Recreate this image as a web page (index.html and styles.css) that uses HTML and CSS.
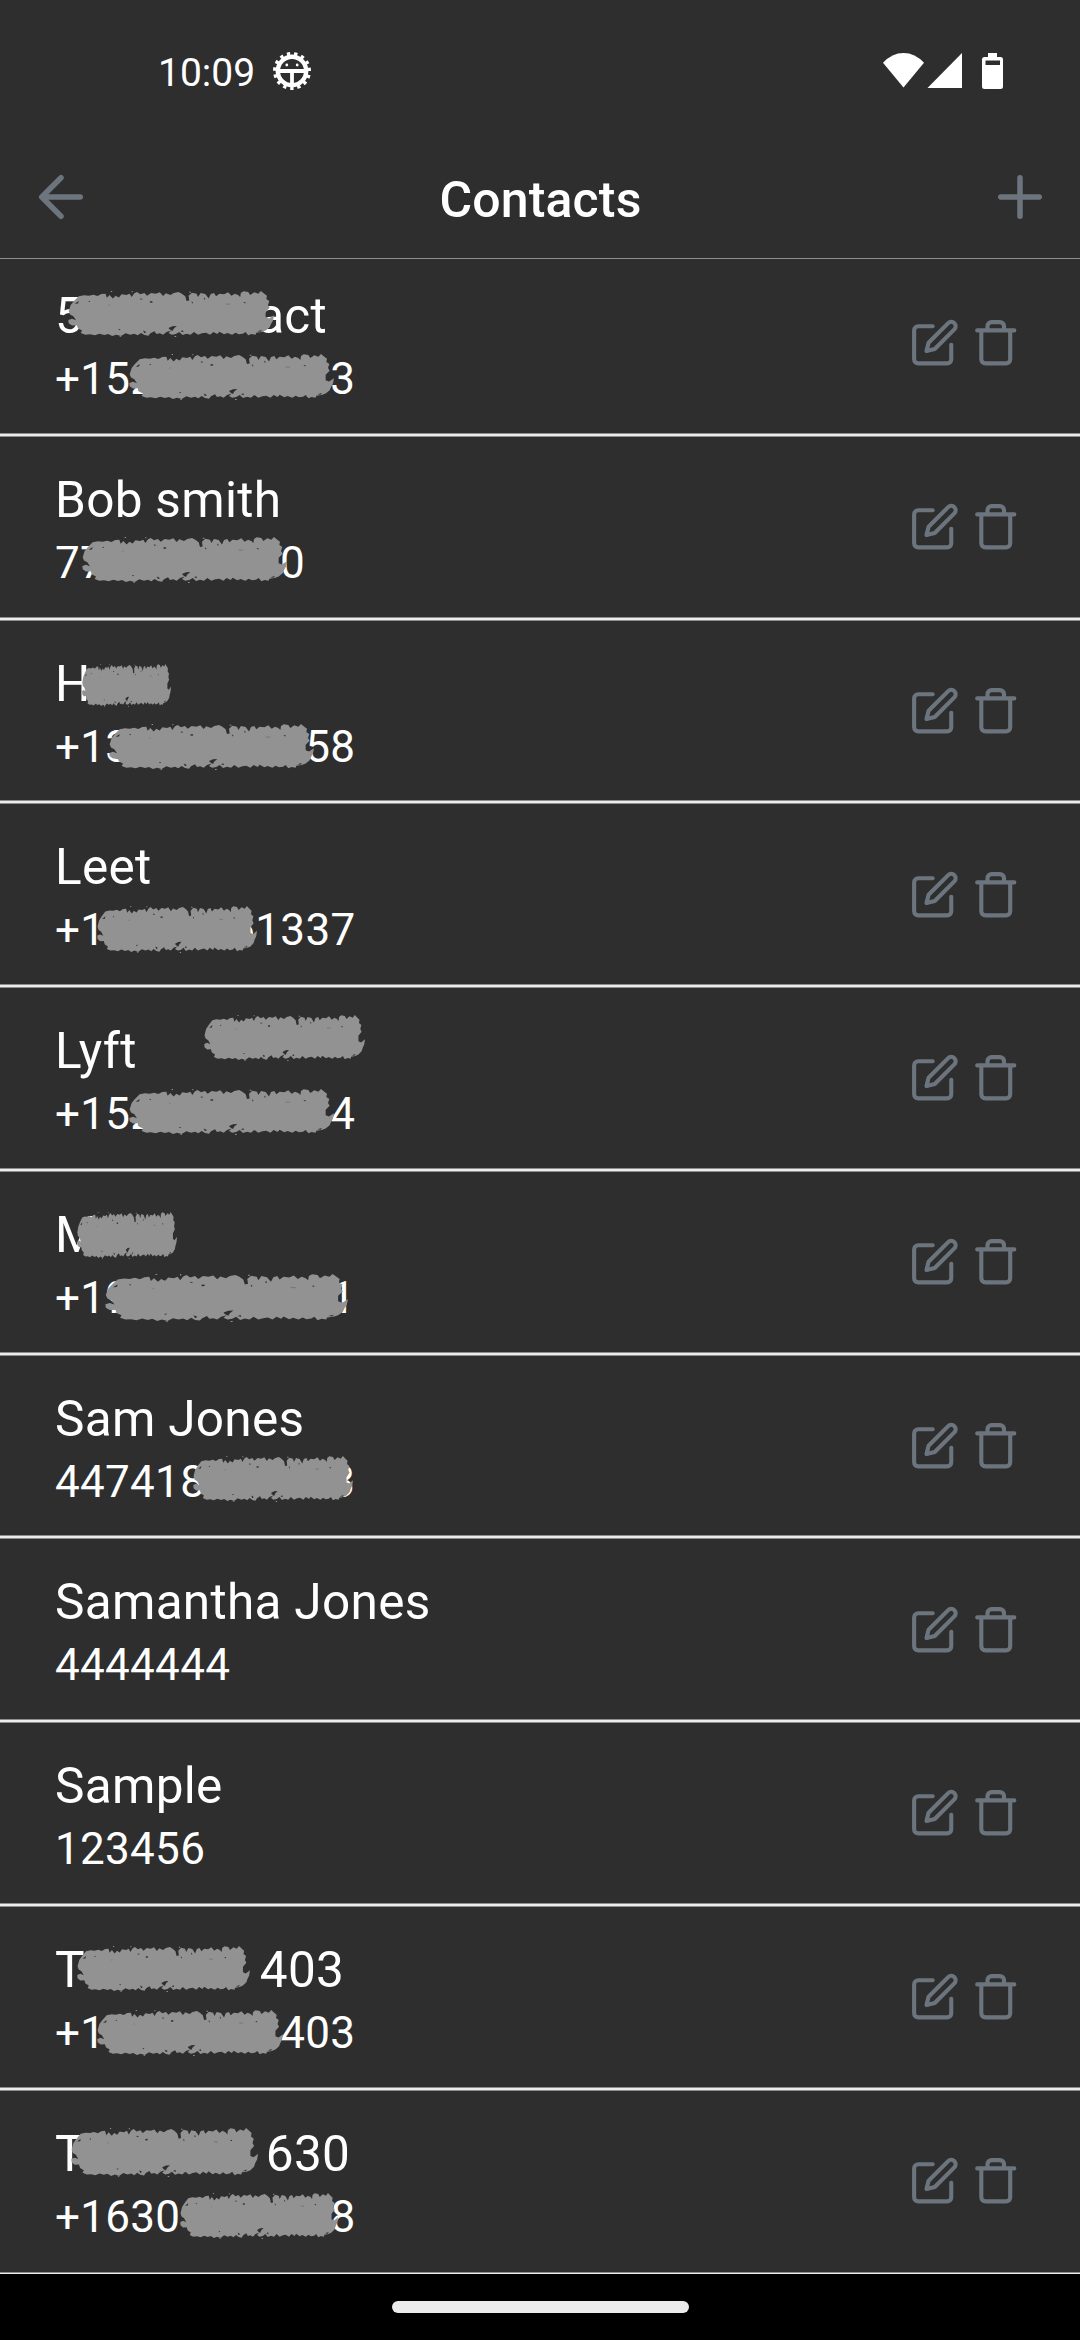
FILE: index.html
```html
<!DOCTYPE html>
<html lang="en">
<head>
<meta charset="utf-8">
<title>Contacts</title>
<link rel="stylesheet" href="styles.css">
</head>
<body>
<svg class="defs" aria-hidden="true">
  <symbol id="edit" viewBox="0 0 24 24"><path d="M11 4H4a2 2 0 0 0-2 2v14a2 2 0 0 0 2 2h14a2 2 0 0 0 2-2v-7"/><path d="M18.5 2.5a2.121 2.121 0 0 1 3 3L12 15l-4 1 1-4 9.5-9.5z"/></symbol>
  <symbol id="trash" viewBox="0 0 24 24"><path d="M3 6h18M19 6v14a2 2 0 0 1-2 2H7a2 2 0 0 1-2-2V6m3 0V4a2 2 0 0 1 2-2h4a2 2 0 0 1 2 2v2"/></symbol>
  <symbol id="scribble" viewBox="0 0 615 137" preserveAspectRatio="none">
    <path fill="#929292" d="M2 60L8 42 18 30 32 16 48 13 62 14 76 11 88 15 100 9 112 8 116 20 124 12 134 22 142 14 152 19 160 10 174 12 184 8 190 18 198 7 206 3 216 10 228 6 236 14 248 6 262 8 274 4 284 15 292 7 306 12 316 6 330 3 340 8 350 16 354 30 362 28 360 14 370 5 384 8 388 18 396 6 410 9 420 22 426 9 436 6 442 16 452 8 466 10 478 4 488 14 498 8 508 12 514 18 516 6 524 1 538 3 544 12 556 4 568 8 576 0 586 8 594 14 592 24 601 30 597 42 602 50 590 62 590 78 600 82 615 72 612 88 606 98 602 108 590 118 578 122 562 124 560 130 548 128 538 132 530 122 522 127 510 129 500 124 490 130 476 125 466 129 452 121 446 128 434 122 424 130 412 124 400 126 388 130 376 122 366 130 354 127 342 131 332 122 322 128 310 130 300 125 308 118 294 122 284 130 274 126 264 128 258 120 246 126 240 133 228 131 218 125 208 132 198 127 186 130 172 126 158 134 144 130 132 134 120 128 108 131 94 127 80 132 66 129 52 130 38 125 42 118 30 112 26 102 12 103 2 96 1 86 12 83 24 87 16 75 6 70Z"/>
    <path fill="#929292" d="M128 0h4v3h-4zM190 0h3v4h-3zM362 2h5v3h-5zM318 134h5v3h-5zM154 134h5v2h-5z"/>
    <path fill="#2f2f2f" d="M300 110l12-5 13-1-9 8-4 7-9-5zM20 38l12-8-2 7zM244 31l7-1 2 4-8 1zM368 31l5 2-1 5zM215 22l9 2-7 2zM60 31l6-2-1 4zM523 34l6-1 1 4zM224 118l10 4-6 4zM565 120l14-4-4 5zM405 24l3-5 2 7zM150 114l7-1-4 4zM336 120l7-3 2 6z"/>
    <path fill="#777" d="M470 37l15 1-4 3-11-1zM120 40l8 2-8 1z"/>
  </symbol>
</svg>
<div class="screen">
  <div class="status">
    <div class="status-left">
      <span>10:09</span>
      <svg class="debug" viewBox="-20 -20 40 40">
        <circle r="14.2" fill="none" stroke="#fff" stroke-width="4.4"/>
        <circle r="17.2" fill="none" stroke="#fff" stroke-width="3.6" pathLength="150" stroke-dasharray="4.6 5.4" stroke-dashoffset="-0.2" transform="rotate(84.5)"/>
        <path d="M-13 0H13M0 0V14" stroke="#fff" stroke-width="3.8"/>
        <circle cx="-5.2" cy="-6" r="1.4" fill="#fff"/><circle cx="5.2" cy="-6" r="1.4" fill="#fff"/>
      </svg>
    </div>
    <svg class="signals" viewBox="882 52 123 38" fill="#fff">
      <path d="M903.5 87.5L883 62.8Q892 53 903.5 53T924 62.8Z"/>
      <path d="M962 53V88H927.5Z"/>
      <path fill-rule="evenodd" d="M988 53h9v4h3.5q2.5 0 2.5 2.5v27q0 2.500-2.500 2.500h-16q-2.500 0-2.500-2.500v-27q0-2.500 2.500-2.500h3.500zM985.500 60.500v4.500h14.500v-4.500z"/>
    </svg>
  </div>
  <header class="bar">
    <svg class="nav" viewBox="0 0 24 24"><path d="M19 12H5M12 19l-7-7 7-7"/></svg>
    <h1>Contacts</h1>
    <svg class="nav" viewBox="0 0 24 24"><path d="M12 5v14M5 12h14"/></svg>
  </header>
  <ul class="list">
    <li><div class="row"><div class="text"><div class="name">5<i style="width:174px"></i>act</div><div class="phone">+152<i style="width:175px"></i>3</div></div><svg class="icon"><use href="#edit"/></svg><svg class="icon"><use href="#trash"/></svg></div>
      <svg class="mark" style="left:68px;top:38px;width:206px;height:46px"><use href="#scribble"/></svg><svg class="mark" style="left:129px;top:101px;width:205px;height:46px"><use href="#scribble"/></svg></li>
    <li><div class="row"><div class="text"><div class="name">Bob smith</div><div class="phone">77<i style="width:175px"></i>0</div></div><svg class="icon"><use href="#edit"/></svg><svg class="icon"><use href="#trash"/></svg></div>
      <svg class="mark" style="left:82px;top:100px;width:205px;height:46px"><use href="#scribble"/></svg></li>
    <li><div class="row"><div class="text"><div class="name">H</div><div class="phone">+13<i style="width:175px"></i>58</div></div><svg class="icon"><use href="#edit"/></svg><svg class="icon"><use href="#trash"/></svg></div>
      <svg class="mark" style="left:82px;top:43px;width:89px;height:43px"><use href="#scribble"/></svg><svg class="mark" style="left:109px;top:103px;width:205px;height:46px"><use href="#scribble"/></svg></li>
    <li><div class="row"><div class="text"><div class="name">Leet</div><div class="phone">+1<i style="width:125px"></i>61337</div></div><svg class="icon"><use href="#edit"/></svg><svg class="icon"><use href="#trash"/></svg></div>
      <svg class="mark" style="left:97px;top:102px;width:160px;height:47px"><use href="#scribble"/></svg></li>
    <li><div class="row"><div class="text"><div class="name">Lyft</div><div class="phone">+152<i style="width:175px"></i>4</div></div><svg class="icon"><use href="#edit"/></svg><svg class="icon"><use href="#trash"/></svg></div>
      <svg class="mark" style="left:204px;top:27px;width:161px;height:46px"><use href="#scribble"/></svg><svg class="mark" style="left:129px;top:101px;width:205px;height:46px"><use href="#scribble"/></svg></li>
    <li><div class="row"><div class="text"><div class="name">M</div><div class="phone">+19<i style="width:200px"></i>1</div></div><svg class="icon"><use href="#edit"/></svg><svg class="icon"><use href="#trash"/></svg></div>
      <svg class="mark" style="left:77px;top:40px;width:100px;height:47px"><use href="#scribble"/></svg><svg class="mark" style="left:105px;top:102px;width:243px;height:48px"><use href="#scribble"/></svg></li>
    <li><div class="row"><div class="text"><div class="name">Sam Jones</div><div class="phone">447418<i style="width:125px"></i>3</div></div><svg class="icon"><use href="#edit"/></svg><svg class="icon"><use href="#trash"/></svg></div>
      <svg class="mark" style="left:193px;top:100px;width:160px;height:46px"><use href="#scribble"/></svg></li>
    <li><div class="row"><div class="text"><div class="name">Samantha Jones</div><div class="phone">4444444</div></div><svg class="icon"><use href="#edit"/></svg><svg class="icon"><use href="#trash"/></svg></div></li>
    <li><div class="row"><div class="text"><div class="name">Sample</div><div class="phone">123456</div></div><svg class="icon"><use href="#edit"/></svg><svg class="icon"><use href="#trash"/></svg></div></li>
    <li><div class="row"><div class="text"><div class="name">T<i style="width:175px"></i>403</div><div class="phone">+1<i style="width:175px"></i>403</div></div><svg class="icon"><use href="#edit"/></svg><svg class="icon"><use href="#trash"/></svg></div>
      <svg class="mark" style="left:77px;top:39px;width:173px;height:46px"><use href="#scribble"/></svg><svg class="mark" style="left:97px;top:103px;width:186px;height:46px"><use href="#scribble"/></svg></li>
    <li><div class="row"><div class="text"><div class="name">T<i style="width:181px"></i>630</div><div class="phone">+1630<i style="width:150px"></i>8</div></div><svg class="icon"><use href="#edit"/></svg><svg class="icon"><use href="#trash"/></svg></div>
      <svg class="mark" style="left:71px;top:37px;width:187px;height:49px"><use href="#scribble"/></svg><svg class="mark" style="left:180px;top:102px;width:158px;height:46px"><use href="#scribble"/></svg></li>
  </ul>
  <footer class="home"><div class="pill"></div></footer>
</div>
</body>
</html>
```

FILE: styles.css
```css
*, *::after { box-sizing: border-box; }
body { margin: 0; background: #2e2e2e; color: #fff; font-family: Roboto, sans-serif; }
svg { display: block; flex: none; }
.defs { position: absolute; width: 0; height: 0; }
.screen { width: 1080px; height: 2340px; overflow: hidden; display: flex; flex-direction: column; }
.status { height: 136px; display: flex; justify-content: space-between; padding: 0 75px 0 158px; }
.status-left { display: flex; gap: 17px; font-size: 39px; line-height: 46px; padding-top: 50px; }
.debug { width: 40px; height: 40px; margin-top: 1px; }
.signals { width: 123px; height: 38px; margin-top: 52px; }
.bar { height: 123px; display: flex; align-items: center; justify-content: space-between; padding: 0 27px 0 28px; border-bottom: 1px solid #8e8e8e; }
.bar h1 { margin: 5px 0 0; font-size: 50px; line-height: 60px; font-weight: 500; letter-spacing: 0.15px; }
.nav, .icon { fill: none; stroke: #6c757d; stroke-width: 2; stroke-linecap: round; stroke-linejoin: round; }
.nav { width: 66px; height: 66px; }
.list { height: 2015px; margin: 0; padding: 0; list-style: none; overflow: hidden; }
.list li { position: relative; height: 183.75px; display: flex; flex-direction: column; }
.list li:first-child { margin-top: -5.8px; }
.list li:last-child { height: 185px; }
.list li::after { content: ""; flex: none; height: 4px; background: #ececec; border: solid #8e8e8e; border-width: 1px 0; }
.row { flex: 1; display: flex; align-items: center; gap: 11.500px; padding: 0 60px 0 55px; }
.text { flex: 1; align-self: flex-start; padding-top: 30px; white-space: nowrap; }
.name { font-size: 49.5px; line-height: 66px; letter-spacing: 0.3px; }
.phone { font-size: 44px; line-height: 60px; letter-spacing: 0.3px; }
.text i { display: inline-block; }
.icon { width: 49.5px; height: 49.5px; }
.mark { position: absolute; }
.home { flex: 1; background: #000; display: flex; justify-content: center; padding-top: 27px; }
.pill { width: 297px; height: 12px; border-radius: 6px; background: #ececec; }
```
